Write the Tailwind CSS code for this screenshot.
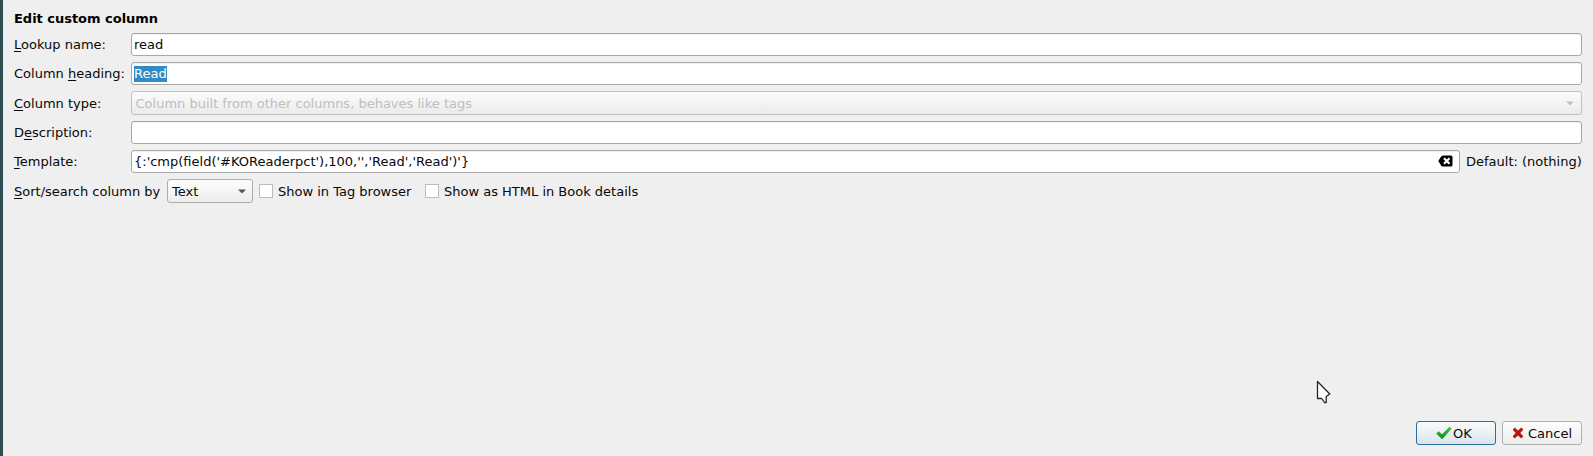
<!DOCTYPE html>
<html lang="en">
<head>
<meta charset="utf-8">
<title>Edit custom column</title>
<script src="https://cdn.jsdelivr.net/npm/@tailwindcss/browser@4"></script>
</head>
<body class="h-[456px] overflow-hidden bg-[#efefef] font-['DejaVu_Sans',sans-serif] text-[13px] leading-[20px] text-[#080808]">
<main class="relative flex h-[456px] flex-col border-l-[3px] border-[#2d4d50] pt-[9px] pr-[11px] pb-[11px] pl-[11px] whitespace-pre"><h1 class="mb-1 h-5 font-bold tracking-[-0.02px] text-black">Edit custom column</h1><form class="grid grid-cols-[117px_1fr] gap-y-[6px]"><label class="h-[23px] pt-[2px]"><u class="underline-offset-2 [text-decoration-skip-ink:none]">L</u>ookup name:</label><div class="h-[23px] rounded-[3px] border border-[#a8a8a8] bg-white px-[2px] pt-px shadow-[inset_0_1px_0_#f0f0f0]">read</div><label class="h-[23px] pt-[2px]">Column <u class="underline-offset-2 [text-decoration-skip-ink:none]">h</u>eading:</label><div class="h-[23px] rounded-[3px] border border-[#a8a8a8] bg-white px-[2px] pt-[3px] shadow-[inset_0_1px_0_#f0f0f0]"><span class="block h-4 w-[33px] bg-[#308cc6] leading-[16px] text-white">Read</span></div><label class="h-6 pt-[3px]"><u class="underline-offset-2 [text-decoration-skip-ink:none]">C</u>olumn type:</label><div class="flex h-6 justify-between rounded-[3px] border border-[#c0c0c0] bg-linear-to-b from-[#fcfcfc] to-[#ebebeb] pr-[7px] pl-1 text-[#bebebe]"><span class="-ml-[0.5px] pt-[2px]">Column built from other columns, behaves like tags</span><svg class="mt-[9px] h-[5px] w-2" viewBox="0 0 8 5"><path d="M0 .5h8L4 4.5z" fill="#c0c0c0"/></svg></div><label class="h-[23px] pt-[2px]">D<u class="underline-offset-2 [text-decoration-skip-ink:none]">e</u>scription:</label><div class="h-[23px] rounded-[3px] border border-[#a8a8a8] bg-white shadow-[inset_0_1px_0_#f0f0f0]"></div><label class="h-[23px] pt-[2px]"><u class="underline-offset-2 [text-decoration-skip-ink:none]">T</u>emplate:</label><div class="flex"><div class="flex h-[23px] w-[1329px] justify-between rounded-[3px] border border-[#a8a8a8] bg-white pr-[6px] pl-[2px] shadow-[inset_0_1px_0_#f0f0f0]"><span class="pt-px">{:'cmp(field('#KOReaderpct'),100,'','Read','Read')'}</span><svg class="mt-1 h-3 w-[15px]" viewBox="0 0 15 12"><path d="M5 .5h8q1.500 0 1.500 1.500v8q0 1.500-1.500 1.500H5Q3.500 11.500 2.800 10L.3 6l2.500-4Q3.500.5 5 .5z"/><path d="m6 3.200 5.500 5.600m0-5.600L6 8.800" stroke="#fff" stroke-width="2.200"/></svg></div><span class="ml-[6px] pt-[2px]">Default: (nothing)</span></div></form><div class="mt-[6px] flex h-6"><span class="w-[153px] pt-[3px]"><u class="underline-offset-2 [text-decoration-skip-ink:none]">S</u>ort/search column by</span><div class="flex h-6 w-[86px] justify-between rounded-[3px] border border-[#adadad] bg-linear-to-b from-[#fdfdfd] to-[#ededed] pr-[6px] pl-1"><span class="pt-[2px]">Text</span><svg class="mt-[9px] h-[5px] w-2" viewBox="0 0 8 5"><path d="M0 .5h8L4 4.500z" fill="#555"/></svg></div><i class="mt-[5px] ml-[6px] size-[14px] border border-[#bcbcbc] bg-white"></i><span class="w-[147px] pt-[3px] ml-[5px]">Show in Tag browser</span><i class="mt-[5px] size-[14px] border border-[#bcbcbc] bg-white"></i><span class="ml-[5px] pt-[3px]">Show as HTML in Book details</span></div><footer class="mt-auto flex justify-end gap-[6px]"><button class="flex h-6 w-20 rounded-[3px] border border-[#28709e] bg-linear-to-b from-[#f9fbfd] to-[#dce4ea] pl-[19px]" type="button"><svg class="mt-[4px] h-[14px] w-4" viewBox="0 0 16 14"><defs><linearGradient id="g" x2="0" y2="1"><stop stop-color="#38cc40"/><stop offset="1" stop-color="#0b861c"/></linearGradient></defs><path d="M.2 7.500 2.600 5.300 6 8.300 13.500.8l2 1.900L6.200 13.200z" fill="url(#g)"/></svg><span class="ml-px pt-[2px]">OK</span></button><button class="flex h-6 w-20 rounded-[3px] border border-[#b0b0b0] bg-linear-to-b from-[#fdfdfd] to-[#ededed] pl-[9px]" type="button"><svg class="mt-[5px] h-3 w-3" viewBox="0 0 12 12"><path d="M2.700.5 6 3.600 9.300.5l2 2.200L8.300 6l3 3.300-2 2.200L6 8.400l-3.300 3.100-2-2.200 3-3.300-3-3.300z" fill="#b91414"/></svg><span class="ml-[4px] pt-[2px]">Cancel</span></button></footer><svg class="absolute top-[380px] left-[1313px] h-6 w-4" viewBox="0 0 16 24"><path d="M1.500 1.500v17h4.200l2.800 4h1.700v-6l3.600-2.500z" fill="#fff" stroke="#26262a" stroke-width="1.300" stroke-linejoin="round"/></svg></main>
</body>
</html>
